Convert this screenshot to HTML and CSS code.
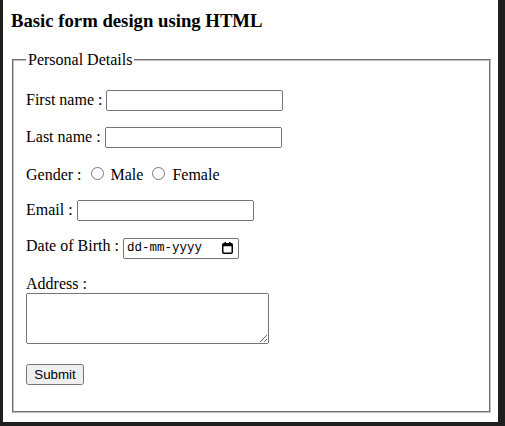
FILE: index.html
```html
<!DOCTYPE html>
<html lang="en">
<head>
<meta charset="utf-8">
<title>Basic form design using HTML</title>
<link rel="stylesheet" href="styles.css">
</head>
<body>
<div class="page">
  <h3 class="title">Basic form design using HTML</h3>
  <form class="form">
    <fieldset class="box">
      <legend class="legend">Personal Details</legend>
      <p class="row">First name : <input type="text" class="text"></p>
      <p class="row">Last name : <input type="text" class="text"></p>
      <p class="row">Gender : <input type="radio" name="gender" class="radio"> Male <input type="radio" name="gender" class="radio"> Female</p>
      <p class="row">Email : <input type="email" class="text"></p>
      <p class="row">Date of Birth : <span class="date"><span class="date-text">dd-mm-yyyy</span><svg class="cal" width="11" height="12" viewBox="0 0 11 12"><rect x="0.75" y="1.75" width="9.5" height="9.5" rx="1" fill="none" stroke="#000" stroke-width="1.5"/><rect x="0.75" y="1.75" width="9.5" height="2.5" fill="#000"/><rect x="2.5" y="0" width="1.5" height="2.5" fill="#000"/><rect x="7" y="0" width="1.5" height="2.5" fill="#000"/></svg></span></p>
      <p class="row">Address :<br><textarea class="area"></textarea></p>
      <p class="row"><button type="button" class="btn">Submit</button></p>
    </fieldset>
  </form>
</div>
</body>
</html>
```
FILE: styles.css
```css
html {
  background: #1f1f1f;
}
body {
  margin: 0;
  font-family: "Liberation Serif", "Times New Roman", serif;
  font-size: 16px;
  color: #000;
}
.page {
  margin-left: 3px;
  width: 495px;
  height: 422px;
  box-sizing: border-box;
  background: #fff;
  padding: 0 7px 0 9px;
  overflow: hidden;
}
.title {
  margin: 0 0 19px -1px;
  padding-top: 10px;
  font-size: 18.72px;
  font-weight: bold;
}
.form {
  margin: 0;
}
.box {
  margin: 0;
  border: 2px groove #c0c0c0;
  padding: 5px 12px 10px;
}
.legend {
  padding: 0 2px;
}
.row {
  margin: 16px 0;
}
.text {
  box-sizing: border-box;
  width: 177px;
  height: 21px;
  font-family: "Liberation Sans", Arial, sans-serif;
  font-size: 13.33px;
}
.radio {
  margin: 3px 3px 0 5px;
}
.date {
  display: inline-flex;
  align-items: center;
  box-sizing: border-box;
  width: 116px;
  height: 21px;
  border: 1px solid #767676;
  border-radius: 2px;
  padding: 0 5px 0 3px;
  font-family: "Liberation Mono", "DejaVu Sans Mono", monospace;
  font-size: 12.5px;
  color: #000;
}
.date-text {
  flex: 1;
}
.cal {
  display: block;
}
.area {
  box-sizing: border-box;
  width: 243px;
  height: 51px;
  font-family: "Liberation Mono", monospace;
  font-size: 13.33px;
}
.btn {
  box-sizing: border-box;
  width: 58px;
  height: 21px;
  font-family: "Liberation Sans", Arial, sans-serif;
  font-size: 13.33px;
  padding: 1px 6px;
}
```
